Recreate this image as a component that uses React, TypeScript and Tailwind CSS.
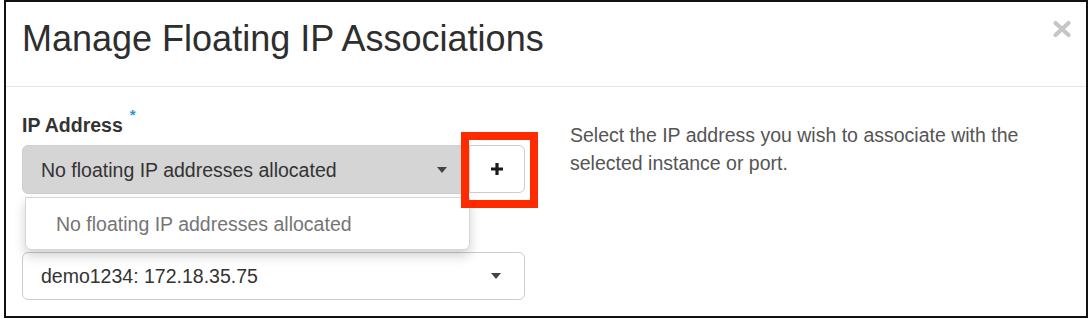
function Caret() {
  return (
    <svg width="10" height="6" viewBox="0 0 10 6" className="shrink-0">
      <path d="M0 0 L10 0 L5 6 Z" fill="#444" />
    </svg>
  );
}

function CloseIcon() {
  return (
    <svg width="20" height="18" viewBox="0 0 20 18" className="mt-[1px]">
      <path d="M3.5 3 L16.5 15 M16.5 3 L3.5 15" stroke="#c6c6c6" strokeWidth="4.2" strokeLinecap="round" />
    </svg>
  );
}

function PlusIcon() {
  return (
    <svg width="14" height="14" viewBox="0 0 14 14">
      <path d="M7 1 V13 M1 7 H13" stroke="#1a1a1a" strokeWidth="3.2" />
    </svg>
  );
}

export default function App() {
  return (
    <div className="h-[319px] w-[1092px] bg-white font-['Liberation_Sans',Arial,sans-serif] text-[#333]">
      <div className="mx-[4px] flex h-[318px] flex-col border-2 border-[#111]">
        {/* header */}
        <div className="flex items-start justify-between border-b border-[#e5e5e5] pl-[16px] pr-[14px] pt-[17px] pb-[27px]">
          <h4 className="text-[36px] leading-[40px] text-[#2e2e2e]">Manage Floating IP Associations</h4>
          <CloseIcon />
        </div>

        {/* body */}
        <div className="flex gap-[45px] pl-[16px] pt-[24px] text-[19.5px] leading-[28px]">
          <div className="w-[503px] shrink-0">
            <label className="flex font-bold">
              IP Address
              <span className="ml-[7px] -mt-[10px] text-[15px] text-[#2a97d6]">*</span>
            </label>

            <div className="relative mt-[6px] flex">
              <div className="flex h-[49px] flex-1 items-center justify-between rounded-l-[6px] border border-[#cfcfcf] bg-[#d5d5d5] pl-[18px] pr-[21px]">
                <span>No floating IP addresses allocated</span>
                <Caret />
              </div>
              <div className="relative flex h-[48px] w-[56px] items-center justify-center rounded-r-[6px] border border-[#cccccc] bg-white">
                <PlusIcon />
                <div className="absolute -left-[9px] -right-[14px] -top-[14px] -bottom-[16px] z-20 border-[8px] border-[#fe2a00]" />
              </div>

              {/* open menu */}
              <div className="absolute left-[3px] right-[55px] top-[52px] z-10 flex h-[53px] items-center rounded-b-[6px] border border-[#d6d6d6] bg-white pl-[30px] text-[#757575] shadow-[0_6px_12px_rgba(0,0,0,0.18)]">
                No floating IP addresses allocated
              </div>
            </div>

            <div className="mt-[58px] flex h-[48px] items-center justify-between rounded-[6px] border border-[#cccccc] bg-white pl-[18px] pr-[23px]">
              <span>demo1234: 172.18.35.75</span>
              <Caret />
            </div>
          </div>

          <p className="mt-[10px] w-[470px] text-[#555]">
            Select the IP address you wish to associate with the selected instance or port.
          </p>
        </div>
      </div>
    </div>
  );
}
